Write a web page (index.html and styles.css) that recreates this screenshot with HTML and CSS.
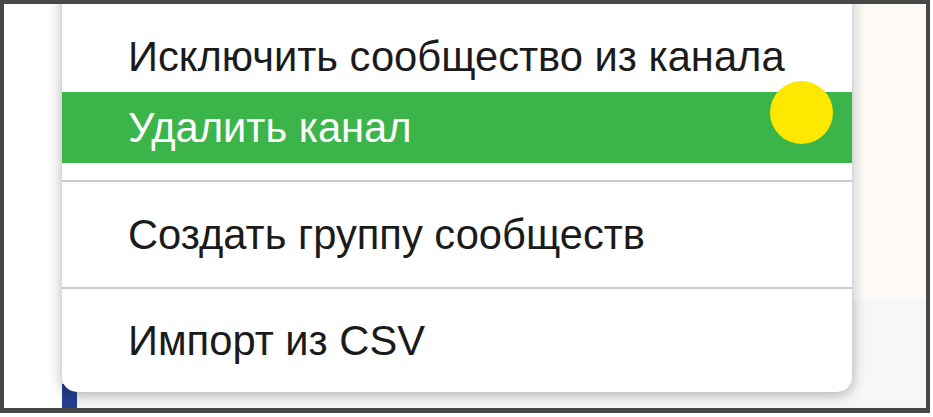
FILE: index.html
```html
<!DOCTYPE html>
<html lang="ru">
<head>
<meta charset="utf-8">
<title>Меню</title>
<link rel="stylesheet" href="styles.css">
</head>
<body>
<div class="frame">
  <div class="app">
    <div class="side"></div>
    <div class="main"></div>
    <div class="aside"></div>
    <div class="side"></div>
    <div class="main-bottom"><span class="navy"></span></div>
    <div class="aside-bottom"></div>
  </div>
  <div class="menu">
    <div class="group">
      <div class="item">Исключить сообщество из канала</div>
      <div class="item active">Удалить канал</div>
    </div>
    <div class="section">Создать группу сообществ</div>
    <div class="section last">Импорт из CSV</div>
  </div>
  <span class="touch"></span>
</div>
</body>
</html>
```

FILE: styles.css
```css
html, body {
  margin: 0;
  padding: 0;
  background: #ffffff;
}
body {
  width: 933px;
  height: 417px;
  overflow: hidden;
  font-family: "Liberation Sans", Arial, sans-serif;
}
.frame {
  position: relative;
  width: 930px;
  height: 413px;
  box-sizing: border-box;
  border: 4px solid #474747;
  border-bottom-width: 5px;
  overflow: hidden;
}
.app {
  display: grid;
  grid-template-columns: 58px 795px 1fr;
  grid-template-rows: 296px 1fr;
  height: 100%;
}
.side { background: #ffffff; }
.main { background: #ffffff; }
.aside { background: #fdf9f4; }
.main-bottom {
  background: #f6f6f8;
  display: flex;
  align-items: flex-end;
}
.navy {
  width: 15px;
  height: 24px;
  background: #233f8f;
}
.aside-bottom { background: #f7f7f9; }

.menu {
  position: absolute;
  left: 58px;
  top: -40px;
  width: 790px;
  background: #ffffff;
  border-radius: 0 0 15px 15px;
  box-shadow: 0 2px 14px rgba(0, 0, 0, 0.32);
  padding-top: 57px;
  color: #1b1b1b;
  font-size: 41.7px;
}
.group {
  padding-bottom: 17px;
}
.item {
  height: 71px;
  display: flex;
  align-items: center;
  padding-left: 66px;
}
.item.active {
  background: #3bb54a;
  color: #ffffff;
}
.section {
  border-top: 2px solid #cbcbcb;
  height: 105px;
  display: flex;
  align-items: center;
  padding-left: 66px;
}
.section.last {
  height: 103px;
}
.touch {
  position: absolute;
  left: 766px;
  top: 77px;
  width: 63px;
  height: 63px;
  border-radius: 50%;
  background: #ffe800;
}
```
